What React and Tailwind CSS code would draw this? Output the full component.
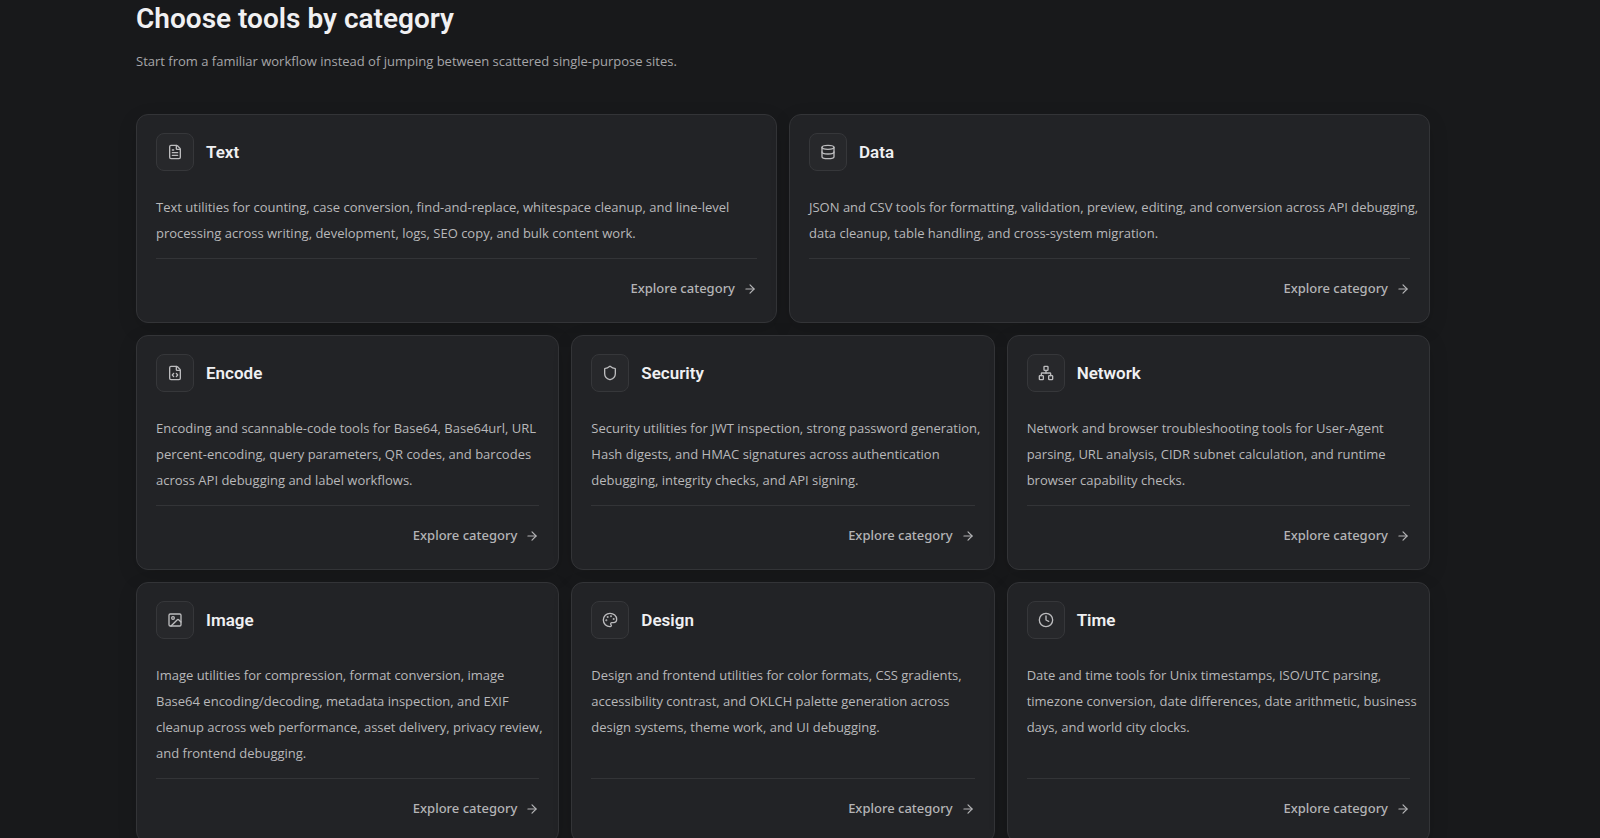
import React from "react";
import {
  ArrowRight,
  Clock,
  Database,
  FileCode,
  FileText,
  Image,
  Network,
  Palette,
  Shield,
} from "lucide-react";

const categories = [
  {
    name: "Text",
    icon: FileText,
    wide: true,
    text: "Text utilities for counting, case conversion, find-and-replace, whitespace cleanup, and line-level\nprocessing across writing, development, logs, SEO copy, and bulk content work.",
  },
  {
    name: "Data",
    icon: Database,
    wide: true,
    text: "JSON and CSV tools for formatting, validation, preview, editing, and conversion across API debugging,\ndata cleanup, table handling, and cross-system migration.",
  },
  {
    name: "Encode",
    icon: FileCode,
    text: "Encoding and scannable-code tools for Base64, Base64url, URL\npercent-encoding, query parameters, QR codes, and barcodes\nacross API debugging and label workflows.",
  },
  {
    name: "Security",
    icon: Shield,
    text: "Security utilities for JWT inspection, strong password generation,\nHash digests, and HMAC signatures across authentication\ndebugging, integrity checks, and API signing.",
  },
  {
    name: "Network",
    icon: Network,
    text: "Network and browser troubleshooting tools for User-Agent\nparsing, URL analysis, CIDR subnet calculation, and runtime\nbrowser capability checks.",
  },
  {
    name: "Image",
    icon: Image,
    text: "Image utilities for compression, format conversion, image\nBase64 encoding/decoding, metadata inspection, and EXIF\ncleanup across web performance, asset delivery, privacy review,\nand frontend debugging.",
  },
  {
    name: "Design",
    icon: Palette,
    text: "Design and frontend utilities for color formats, CSS gradients,\naccessibility contrast, and OKLCH palette generation across\ndesign systems, theme work, and UI debugging.",
  },
  {
    name: "Time",
    icon: Clock,
    text: "Date and time tools for Unix timestamps, ISO/UTC parsing,\ntimezone conversion, date differences, date arithmetic, business\ndays, and world city clocks.",
  },
];

function CategoryCard({ name, icon: Icon, text, wide }) {
  return (
    <article
      className={
        (wide ? "lg:col-span-3" : "lg:col-span-2") +
        " flex flex-col rounded-xl border border-[#333437] bg-[#222326] px-[19px] pt-[18px] pb-[19px] shadow-[0_6px_20px_rgba(0,0,0,0.12)]"
      }
    >
      <div className="flex items-center gap-3">
        <span className="flex size-[38px] shrink-0 items-center justify-center rounded-lg border border-[#36373a] bg-[#27282b] text-[#bcbcbe]">
          <Icon size={16} strokeWidth={2} aria-hidden="true" />
        </span>
        <h3 className="font-['Roboto',sans-serif] text-[17px] leading-6 font-semibold text-[#f0f0f2]">
          {name}
        </h3>
      </div>
      <p className="mt-[23px] mb-3 text-[13px] leading-[26px] text-[#b8b8ba] xl:whitespace-pre">
        {text}
      </p>
      <div className="mt-auto flex justify-end border-t border-[#333437] pt-4">
        <a
          href="#"
          className="flex h-7 items-center gap-2 font-['Noto_Sans',sans-serif] text-[13px] font-medium text-[#b4b4b6]"
        >
          Explore category
          <ArrowRight size={14} strokeWidth={2} aria-hidden="true" />
        </a>
      </div>
    </article>
  );
}

export default function App() {
  return (
    <main className="min-h-screen bg-[#18191b] pr-[170px] pb-12 pl-[136px] font-['Open_Sans',sans-serif]">
      <h2 className="font-['Roboto',sans-serif] text-[28px] leading-[38px] font-semibold text-[#f0f0f2]">
        Choose tools by category
      </h2>
      <p className="mt-[10px] text-[13px] leading-[26px] text-[#a6a6a9]">
        Start from a familiar workflow instead of jumping between scattered
        single-purpose sites.
      </p>
      <div className="mt-10 grid grid-cols-1 gap-3 lg:grid-cols-6">
        {categories.map((category) => (
          <CategoryCard key={category.name} {...category} />
        ))}
      </div>
    </main>
  );
}
